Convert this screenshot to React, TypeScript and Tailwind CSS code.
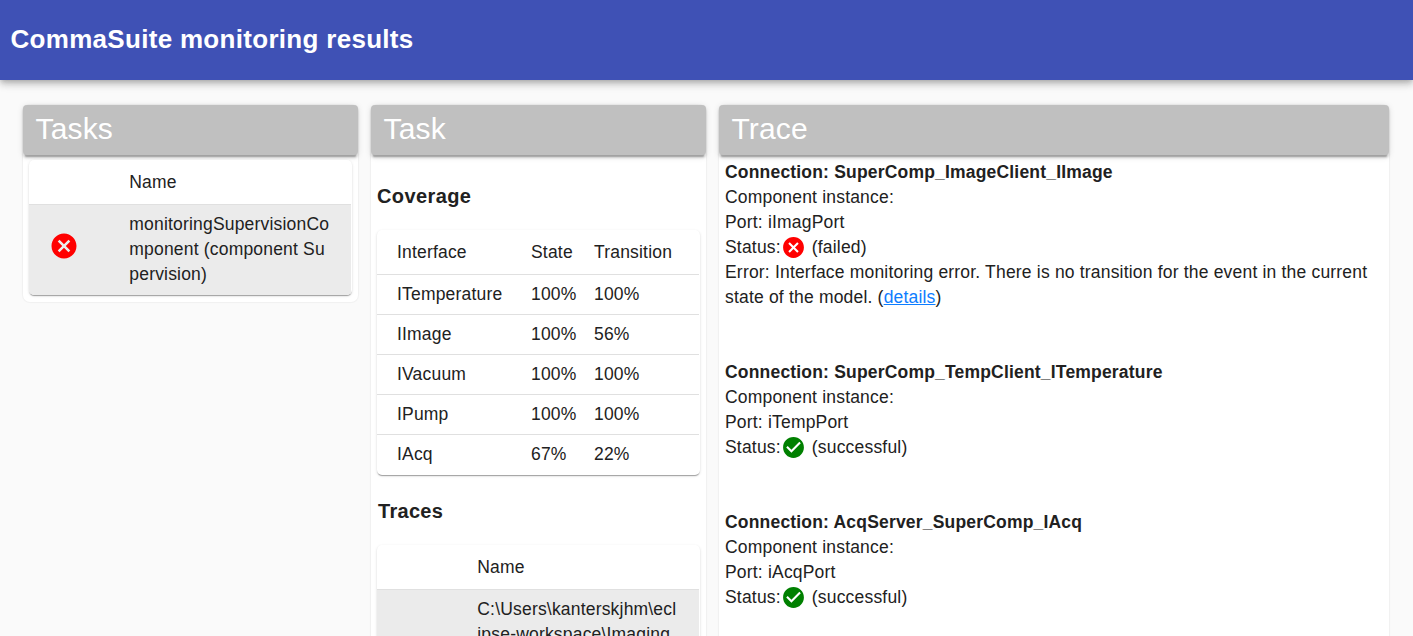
import type { ReactNode } from "react";

const CARD_SHADOW =
  "shadow-[0_2px_1px_-1px_rgba(0,0,0,0.2),0_1px_1px_0_rgba(0,0,0,0.14),0_1px_3px_0_rgba(0,0,0,0.12)]";

function FailIcon({ className }: { className: string }) {
  return (
    <svg viewBox="0 0 24 24" className={className} fill="red">
      <path d="M12 2C6.47 2 2 6.47 2 12s4.47 10 10 10 10-4.47 10-10S17.53 2 12 2zm5 13.59L15.59 17 12 13.41 8.41 17 7 15.59 10.59 12 7 8.41 8.41 7 12 10.59 15.59 7 17 8.41 13.41 12 17 15.59z" />
    </svg>
  );
}

function OkIcon({ className }: { className: string }) {
  return (
    <svg viewBox="0 0 24 24" className={className} fill="green">
      <path d="M12 2C6.48 2 2 6.48 2 12s4.48 10 10 10 10-4.48 10-10S17.52 2 12 2zm-2 15l-5-5 1.41-1.41L10 14.17l7.59-7.59L19 8l-9 9z" />
    </svg>
  );
}

function Panel({ title, className, children }: { title: string; className: string; children: ReactNode }) {
  return (
    <section className={`rounded-[7px] bg-white shadow-[0_0_1px_1px_rgba(0,0,0,0.04)] ${className}`}>
      <h2 className="h-[50px] rounded-[4px] bg-[#c0c0c0] pl-[12.5px] text-[30px] leading-[47px] tracking-[0.15px] text-white shadow-[0_3.75px_1.25px_-2.5px_rgba(0,0,0,0.2),0_2.5px_2.5px_0_rgba(0,0,0,0.14),0_1.25px_6.25px_0_rgba(0,0,0,0.12)]">
        {title}
      </h2>
      {children}
    </section>
  );
}

function NameTable({ children, icon }: { children: ReactNode; icon?: ReactNode }) {
  return (
    <div className={`overflow-hidden rounded-[5px] bg-white pr-px ${CARD_SHADOW}`}>
      <div className="flex h-[45px] items-center border-b border-[#e0e0e0] pl-[100.3px]">Name</div>
      <div className="flex items-center bg-[#ebebeb]">
        <div className="mb-2 w-[100.3px] shrink-0 pl-5">{icon}</div>
        <div className="pt-[7px] pb-2 whitespace-pre">{children}</div>
      </div>
    </div>
  );
}

const coverage = [
  ["ITemperature", "100%", "100%"],
  ["IImage", "100%", "56%"],
  ["IVacuum", "100%", "100%"],
  ["IPump", "100%", "100%"],
  ["IAcq", "67%", "22%"],
];

function CoverageTable() {
  return (
    <div className={`overflow-hidden rounded-[5px] bg-white pr-px pb-px ${CARD_SHADOW}`}>
      <div className="grid h-[45px] grid-cols-[134px_63px_1fr] items-center border-b border-[#e0e0e0] pl-5">
        <span>Interface</span>
        <span>State</span>
        <span>Transition</span>
      </div>
      {coverage.map(([name, state, transition]) => (
        <div
          key={name}
          className="grid h-10 grid-cols-[134px_63px_1fr] items-center border-b border-[#e0e0e0] pl-5 last:h-[39px] last:border-b-0"
        >
          <span>{name}</span>
          <span>{state}</span>
          <span>{transition}</span>
        </div>
      ))}
    </div>
  );
}

function Connection({ name, port, failed, children }: { name: string; port: string; failed?: boolean; children?: ReactNode }) {
  return (
    <div className="mb-[50px]">
      <div className="font-bold">Connection: {name}</div>
      <div>Component instance:</div>
      <div>Port: {port}</div>
      <div className="flex h-[25px] items-center">
        <span>Status:</span>
        {failed ? <FailIcon className="size-[25px]" /> : <OkIcon className="size-[25px]" />}
        <span className="ml-[6px]">{failed ? "(failed)" : "(successful)"}</span>
      </div>
      {children}
    </div>
  );
}

export default function App() {
  return (
    <div className="flex h-[636px] flex-col overflow-hidden bg-[#fafafa] font-['Liberation_Sans',Arial,sans-serif] text-[17.5px] leading-[25px] tracking-[0.188px] text-[#212121]">
      <header className="z-10 h-20 shrink-0 bg-[#3f51b5] pl-[10.5px] text-white shadow-[0_2.5px_5px_-1.25px_rgba(0,0,0,0.2),0_5px_6.25px_0_rgba(0,0,0,0.14),0_1.25px_12.5px_0_rgba(0,0,0,0.12)]">
        <h1 className="text-[26px] leading-[78px] font-bold tracking-[0.3px]">CommaSuite monitoring results</h1>
      </header>
      <main className="flex items-start gap-[13px] pt-[25px] pl-[23px]">
        <Panel title="Tasks" className="w-[335px] shrink-0 pb-[6px]">
          <div className="mt-[5px] mr-[6px] mb-px ml-[6px]">
            <NameTable icon={<FailIcon className="size-[30px]" />}>
              {"monitoringSupervisionCo\nmponent (component Su\npervision)"}
            </NameTable>
          </div>
        </Panel>
        <Panel title="Task" className="h-[600px] w-[335px] shrink-0">
          <div className="px-[6px]">
            <h3 className="pt-[29px] pb-[21px] text-[20px] leading-[25px] font-bold tracking-[0.4px]">Coverage</h3>
            <CoverageTable />
            <h3 className="pt-6 pb-[21px] pl-px text-[20px] leading-[25px] font-bold tracking-[0.3px]">Traces</h3>
            <NameTable>{"C:\\Users\\kanterskjhm\\ecl\nipse-workspace\\Imaging"}</NameTable>
          </div>
        </Panel>
        <Panel title="Trace" className="h-[600px] w-[670px] shrink-0">
          <div className="px-[6px] pt-[5px]">
            <Connection name="SuperComp_ImageClient_IImage" port="iImagPort" failed>
              <p>
                Error: Interface monitoring error. There is no transition for the event in the current
                <br />
                state of the model. (<a href="#details" className="text-[#0d7dff] underline">details</a>)
              </p>
            </Connection>
            <Connection name="SuperComp_TempClient_ITemperature" port="iTempPort" />
            <Connection name="AcqServer_SuperComp_IAcq" port="iAcqPort" />
          </div>
        </Panel>
      </main>
    </div>
  );
}
